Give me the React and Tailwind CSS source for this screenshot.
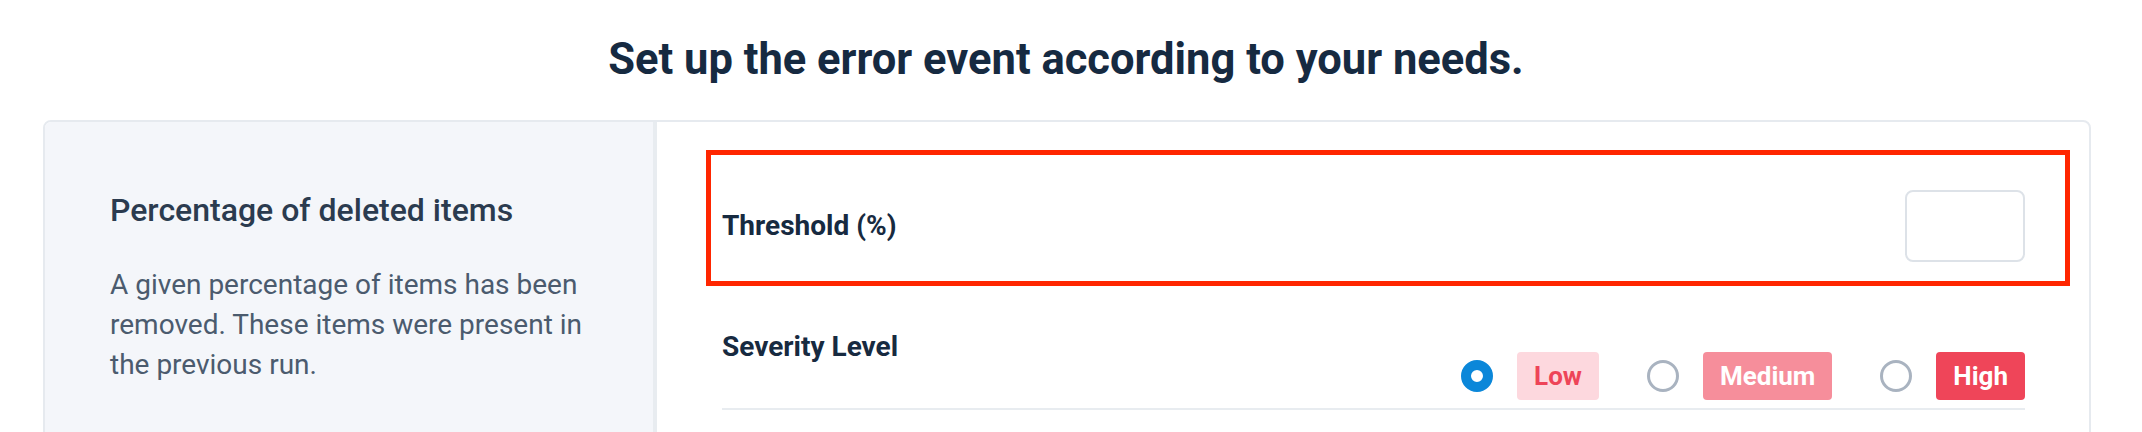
const levels = [
  { name: "Low", checked: true, badge: "bg-[#fdd8de] text-[#ee4458]" },
  { name: "Medium", checked: false, badge: "bg-[#f68e9b] text-white" },
  { name: "High", checked: false, badge: "bg-[#ef4559] text-white" },
];

const Radio = ({ checked }) =>
  checked ? (
    <span className="w-[32px] h-[32px] rounded-full border-[10px] border-[#0b87d9] bg-white shrink-0" />
  ) : (
    <span className="w-[32px] h-[32px] rounded-full border-[3px] border-[#a9b3c0] bg-white shrink-0" />
  );

const App = () => {
  return (
    <div className="w-[2142px] h-[432px] overflow-hidden bg-white font-['Roboto','Liberation_Sans',sans-serif]">
      <div className="ml-[43px] w-[2048px]">
        <h1 className="pt-[34px] pr-[2px] text-center text-[43.5px] leading-[52px] font-bold text-[#162a41]">
          Set up the error event according to your needs.
        </h1>

        <div className="mt-[34px] h-[400px] flex border-2 border-[#e6eaef] rounded-[8px] overflow-hidden">
          {/* left description */}
          <div className="w-[612px] shrink-0 bg-[#f4f6fa] border-r-4 border-[#e8ecf0] pl-[65px] pr-16 pt-[68px]">
            <h2 className="text-[32px] leading-[40px] font-medium text-[#2b3b4f]">
              Percentage of deleted items
            </h2>
            <p className="mt-[35px] text-[28px] leading-[40px] text-[#4b5b6e]">
              A given percentage of items has been removed. These items were present in the previous run.
            </p>
          </div>

          {/* right settings */}
          <div className="relative flex-1 pl-[65px] pr-16 pt-[68px]">
            <div className="absolute left-[49px] top-[28px] w-[1364px] h-[136px] border-[5px] border-[#ff2600]" />

            <div className="flex items-center justify-between h-[72px]">
              <label className="text-[28px] leading-[40px] font-bold text-[#172a40]">Threshold (%)</label>
              <input className="w-[120px] h-[72px] border-2 border-[#dde2e8] rounded-[8px] bg-white" />
            </div>

            <div className="mt-[65px] flex items-start justify-between pb-2 border-b-2 border-[#e8ecf0]">
              <span className="text-[28px] leading-[40px] font-bold text-[#172a40]">Severity Level</span>
              <div className="mt-[25px] flex items-center">
                {levels.map((l, i) => (
                  <div key={l.name} className={`flex items-center gap-6 ${i > 0 ? "ml-12" : ""}`}>
                    <Radio checked={l.checked} />
                    <span className={`h-[48px] px-[17px] flex items-center rounded-[4px] text-[26px] font-bold ${l.badge}`}>
                      {l.name}
                    </span>
                  </div>
                ))}
              </div>
            </div>
          </div>
        </div>
      </div>
    </div>
  );
};

export default App;
